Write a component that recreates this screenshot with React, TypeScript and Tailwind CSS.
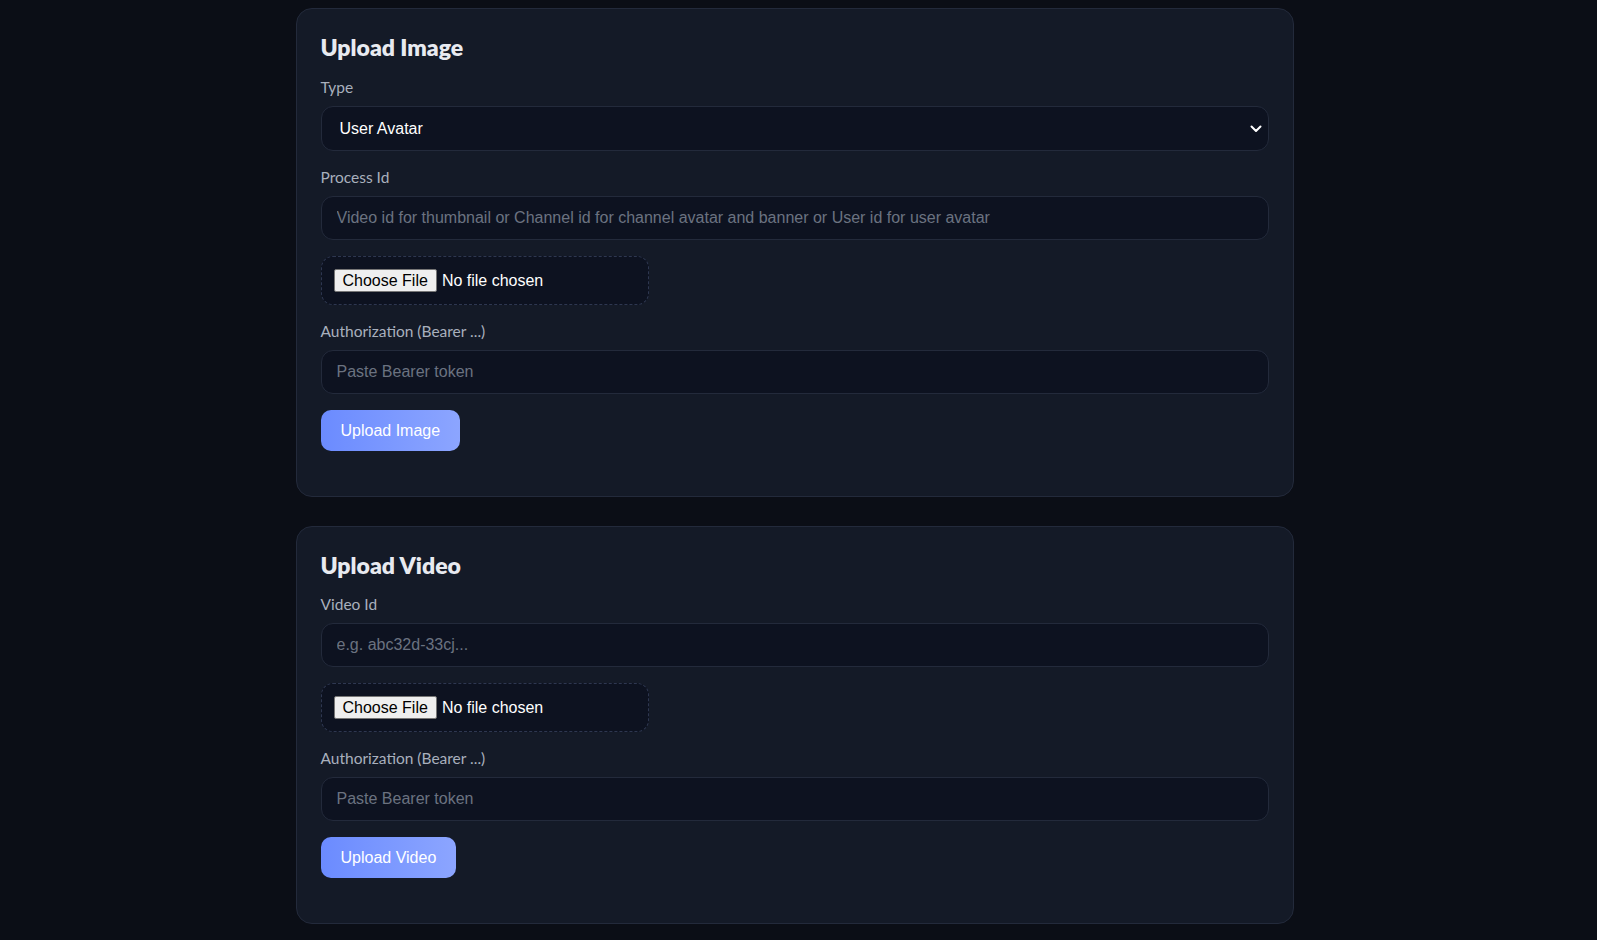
import React from "react";

const labelCls = "block text-[15.5px] leading-5 text-[#a9b0bd] mb-[9px]";
const inputCls =
  "w-full h-[44px] rounded-[12px] border border-[#232a3b] bg-[#0d1220] px-[15px] text-[16px] text-[#e5e7eb] placeholder:text-[#6b7280] outline-none";

function FileBox() {
  return (
    <div className="w-[328px] h-[49px] rounded-[12px] border border-dashed border-[#2e3750] bg-[#0d1220] px-3 flex items-center">
      <input
        type="file"
        className="text-[16px] leading-[19px] text-white file:mr-[5px] file:rounded-[2px] file:border file:border-solid file:border-[#767676] file:bg-[#efefef] file:px-[8px] file:py-[1px] file:text-[16px] file:leading-[19px] file:text-black"
        style={{ fontFamily: "'Liberation Sans', Arial, sans-serif" }}
      />
    </div>
  );
}

function Card({ title, titleMb, children }: { title: string; titleMb: string; children: React.ReactNode }) {
  return (
    <div className="w-[998px] rounded-[16px] border border-[#232a3b] bg-[#141a27] px-6 pt-6 pb-[45px]">
      <h2
        className={"text-[23px] leading-[28px] font-extrabold text-[#e8eaf0] " + titleMb}
        style={{ fontFamily: "Lato, sans-serif" }}
      >
        {title}
      </h2>
      <div className="flex flex-col gap-4" style={{ fontFamily: "'Liberation Sans', Arial, sans-serif" }}>
        {children}
      </div>
    </div>
  );
}

function Label({ children }: { children: React.ReactNode }) {
  return (
    <label className={labelCls} style={{ fontFamily: "Lato, sans-serif" }}>
      {children}
    </label>
  );
}

function UploadButton({ children }: { children: React.ReactNode }) {
  return (
    <div>
      <button className="h-[41px] rounded-[10px] bg-gradient-to-r from-[#6b8bff] to-[#8ca5ff] px-5 text-[16px] text-white">
        {children}
      </button>
    </div>
  );
}

export default function App() {
  return (
    <div className="min-h-screen w-full bg-[#0b0e16] pt-2 pb-8 pr-2 flex flex-col items-center gap-[29px]">
      <Card title="Upload Image" titleMb="mb-4">
        <div>
          <Label>Type</Label>
          <div className="relative">
            <select
              className="w-full h-[45px] appearance-none rounded-[12px] border border-[#232a3b] bg-[#0d1220] pl-[18px] pr-10 text-[16px] text-white outline-none"
              defaultValue="avatar"
            >
              <option value="avatar">User Avatar</option>
              <option value="thumb">Thumbnail</option>
              <option value="chavatar">Channel Avatar</option>
              <option value="banner">Channel Banner</option>
            </select>
            <svg
              className="pointer-events-none absolute right-[7px] top-1/2 -translate-y-1/2"
              width="12"
              height="8"
              viewBox="0 0 12 8"
              fill="none"
            >
              <path d="M1.5 1.5 6 6l4.5-4.5" stroke="#ffffff" strokeWidth="2" strokeLinecap="round" strokeLinejoin="round" />
            </svg>
          </div>
        </div>
        <div>
          <Label>Process Id</Label>
          <input
            className={inputCls}
            placeholder="Video id for thumbnail or Channel id for channel avatar and banner or User id for user avatar"
          />
        </div>
        <FileBox />
        <div>
          <Label>Authorization (Bearer ...)</Label>
          <input className={inputCls} placeholder="Paste Bearer token" />
        </div>
        <UploadButton>Upload Image</UploadButton>
      </Card>
      <Card title="Upload Video" titleMb="mb-[15px]">
        <div>
          <Label>Video Id</Label>
          <input className={inputCls} placeholder="e.g. abc32d-33cj..." />
        </div>
        <FileBox />
        <div>
          <Label>Authorization (Bearer ...)</Label>
          <input className={inputCls} placeholder="Paste Bearer token" />
        </div>
        <UploadButton>Upload Video</UploadButton>
      </Card>
    </div>
  );
}
